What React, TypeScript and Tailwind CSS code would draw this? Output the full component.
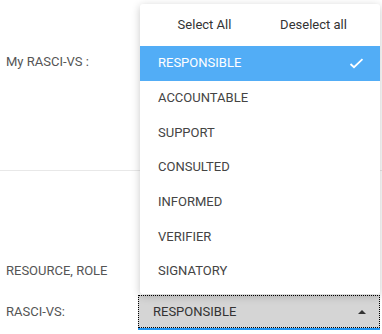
import React from "react";

const OPTIONS = [
  "RESPONSIBLE",
  "ACCOUNTABLE",
  "SUPPORT",
  "CONSULTED",
  "INFORMED",
  "VERIFIER",
  "SIGNATORY",
];

function CheckIcon() {
  return (
    <svg width="15" height="11" viewBox="0 0 15 11" fill="none">
      <path d="M1.5 6 L5 9.2 L13.5 1.2" stroke="white" strokeWidth="1.8" />
    </svg>
  );
}

function RasciMenu({ selected }: { selected: string[] }) {
  return (
    <div className="absolute left-[140px] top-[4px] w-[240px] h-[290px] bg-white rounded-[3px] shadow-[0_2px_8px_rgba(0,0,0,0.22)] overflow-hidden">
      <div className="grid grid-cols-2 h-[42px] items-center pl-[10px] pr-[12px] text-[13px] text-[#333]">
        <button className="text-center">Select All</button>
        <button className="text-center">Deselect all</button>
      </div>
      {OPTIONS.map((opt) => {
        const active = selected.includes(opt);
        return (
          <div
            key={opt}
            className={
              active
                ? "flex items-center justify-between h-[34.7px] pl-[18px] pr-[16px] bg-[#52adf6] text-white"
                : "flex items-center justify-between h-[34.7px] pl-[18px] pr-[16px] text-[#444]"
            }
          >
            <span>{opt}</span>
            {active && <CheckIcon />}
          </div>
        );
      })}
    </div>
  );
}

export default function App() {
  const selected = ["RESPONSIBLE"];

  return (
    <div className="relative w-[382px] h-[334px] bg-white overflow-hidden font-['Roboto',sans-serif] text-[13px] leading-[16px]">
      <div className="h-[171px] border-b border-[#e8e8e8] pl-[6px] pt-[54px] text-[#555]">
        My RASCI-VS :
      </div>

      <div className="mt-[92px] pl-[6px] text-[#555]">RESOURCE, ROLE</div>

      <div className="flex items-center mt-[16px]">
        <div className="w-[138px] pl-[6px] text-[#555] -mt-[2px]">RASCI-VS:</div>
        <div className="w-[242px] h-[35px] border-b-2 border-[#2196f3]">
          <div className="flex items-center justify-between h-[33px] bg-[#d5d5d5] border border-dotted border-black pl-[14px] pr-[13px] text-[#333]">
            <span>{selected[0]}</span>
            <svg width="8" height="4" viewBox="0 0 8 4">
              <path d="M0 4 L4 0 L8 4 Z" fill="#333" />
            </svg>
          </div>
        </div>
      </div>

      <RasciMenu selected={selected} />
    </div>
  );
}
